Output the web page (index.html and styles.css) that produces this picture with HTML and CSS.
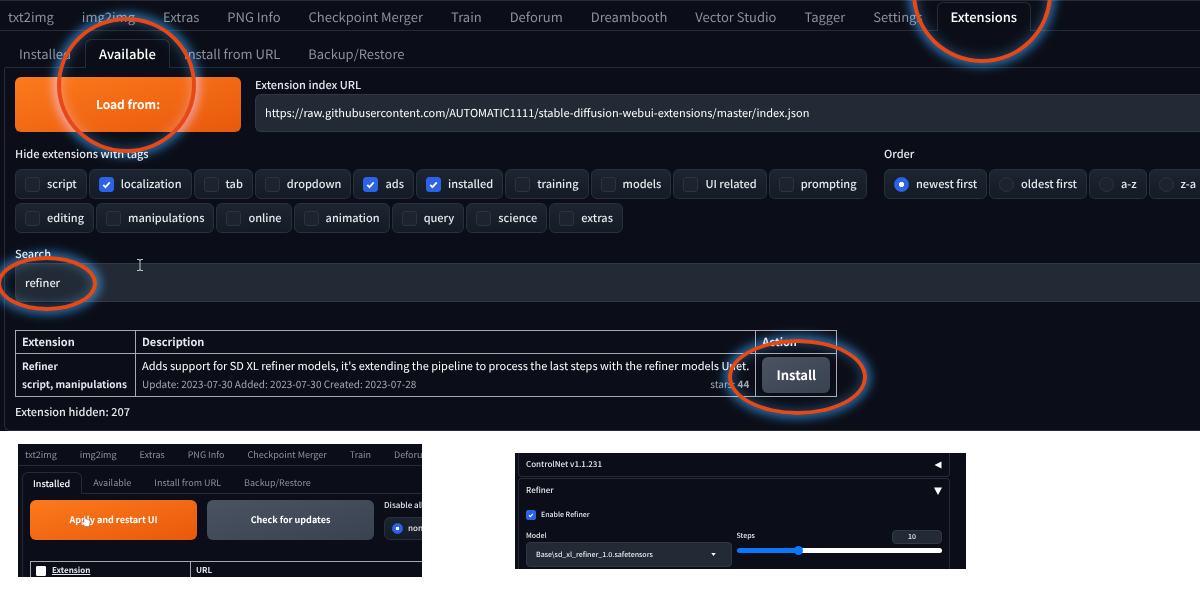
FILE: index.html
```html
<!DOCTYPE html>
<html lang="en">
<head>
<meta charset="utf-8">
<title>Extensions</title>
<link rel="stylesheet" href="styles.css">
</head>
<body>
<main class="page">
  <section class="shot shot-main">
    <nav class="tabs tabs-top">
      <button class="tab">txt2img</button><button class="tab">img2img</button><button class="tab">Extras</button><button class="tab">PNG Info</button><button class="tab">Checkpoint Merger</button><button class="tab">Train</button><button class="tab">Deforum</button><button class="tab">Dreambooth</button><button class="tab">Vector Studio</button><button class="tab">Tagger</button><button class="tab">Settings</button><button class="tab active">Extensions</button>
    </nav>
    <nav class="tabs tabs-sub">
      <button class="tab">Installed</button><button class="tab active">Available</button><button class="tab">Install from URL</button><button class="tab">Backup/Restore</button>
    </nav>
    <div class="panel">
      <div class="load-row">
        <button class="btn primary load">Load from:</button>
        <div class="field grow">
          <label for="url">Extension index URL</label>
          <input id="url" class="text url" type="text" value="https://raw.githubusercontent.com/AUTOMATIC1111/stable-diffusion-webui-extensions/master/index.json">
        </div>
      </div>
      <div class="filters">
        <fieldset class="group tags">
          <legend>Hide extensions with tags</legend>
          <div class="pills">
            <label class="pill"><input type="checkbox">script</label>
            <label class="pill"><input type="checkbox" checked>localization</label>
            <label class="pill"><input type="checkbox">tab</label>
            <label class="pill"><input type="checkbox">dropdown</label>
            <label class="pill"><input type="checkbox" checked>ads</label>
            <label class="pill"><input type="checkbox" checked>installed</label>
            <label class="pill"><input type="checkbox">training</label>
            <label class="pill"><input type="checkbox">models</label>
            <label class="pill"><input type="checkbox">UI related</label>
            <label class="pill"><input type="checkbox">prompting</label>
            <label class="pill"><input type="checkbox">editing</label>
            <label class="pill"><input type="checkbox">manipulations</label>
            <label class="pill"><input type="checkbox">online</label>
            <label class="pill"><input type="checkbox">animation</label>
            <label class="pill"><input type="checkbox">query</label>
            <label class="pill"><input type="checkbox">science</label>
            <label class="pill"><input type="checkbox">extras</label>
          </div>
        </fieldset>
        <fieldset class="group order">
          <legend>Order</legend>
          <div class="pills nowrap">
            <label class="pill"><input type="radio" name="order" checked>newest first</label>
            <label class="pill"><input type="radio" name="order">oldest first</label>
            <label class="pill"><input type="radio" name="order">a-z</label>
            <label class="pill"><input type="radio" name="order">z-a</label>
          </div>
        </fieldset>
      </div>
      <div class="field search">
        <label for="search">Search</label>
        <input id="search" class="text" type="text" value="refiner">
      </div>
      <table class="results">
        <thead><tr><th>Extension</th><th>Description</th><th>Action</th></tr></thead>
        <tbody><tr>
          <td class="name">Refiner<br>script, manipulations</td>
          <td class="desc">Adds support for SD XL refiner models, it's extending the pipeline to process the last steps with the refiner models Unet.
            <div class="meta"><span>Update: 2023-07-30 Added: 2023-07-30 Created: 2023-07-28</span><span>stars: <b>44</b></span></div></td>
          <td><button class="btn secondary install">Install</button></td>
        </tr></tbody>
      </table>
      <p class="hidden-count">Extension hidden: 207</p>
    </div>
  </section>

  <div class="lower">
    <section class="shot shot-installed">
      <nav class="tabs tabs-top">
        <button class="tab">txt2img</button><button class="tab">img2img</button><button class="tab">Extras</button><button class="tab">PNG Info</button><button class="tab">Checkpoint Merger</button><button class="tab">Train</button><button class="tab">Deforum</button>
      </nav>
      <nav class="tabs tabs-sub">
        <button class="tab active">Installed</button><button class="tab">Available</button><button class="tab">Install from URL</button><button class="tab">Backup/Restore</button>
      </nav>
      <div class="panel">
        <div class="actions">
          <button class="btn primary">Apply and restart UI</button>
          <button class="btn secondary">Check for updates</button>
          <fieldset class="group disable">
            <legend>Disable all</legend>
            <div class="pills nowrap"><label class="pill"><input type="radio" name="disable" checked>none</label></div>
          </fieldset>
        </div>
        <table class="installed">
          <thead><tr>
            <th><label class="check-all"><input type="checkbox"><span>Extension</span></label></th>
            <th>URL</th>
          </tr></thead>
        </table>
      </div>
    </section>

    <section class="shot shot-refiner">
      <div class="accordion">
        <button class="acc-head">ControlNet v1.1.231
          <svg class="arrow" viewBox="0 0 8 8"><path d="M7.500 .5V7.500L.5 4z"/></svg></button>
      </div>
      <div class="accordion open">
        <button class="acc-head">Refiner
          <svg class="arrow" viewBox="0 0 8 8"><path d="M0 .5H8L4 8z"/></svg></button>
        <label class="enable"><input type="checkbox" checked>Enable Refiner</label>
        <div class="controls">
          <div class="model">
            <label for="model">Model</label>
            <select id="model"><option>Base\sd_xl_refiner_1.0.safetensors</option></select>
          </div>
          <div class="steps">
            <div class="steps-head">
              <label for="steps">Steps</label>
              <input class="num" type="text" value="10" aria-label="Steps value">
            </div>
            <input id="steps" type="range" min="1" max="32" value="10">
          </div>
        </div>
      </div>
    </section>
  </div>

  <span class="ring ring-tab"></span>
  <span class="ring ring-load"></span>
  <span class="ring ring-search"></span>
  <span class="ring ring-install"></span>
  <svg class="ibeam" viewBox="0 0 8 14"><path d="M1 1.500H3Q4 1.500 4 2.500Q4 1.500 5 1.500H7M4 2V12M1 12.500H3Q4 12.500 4 11.500Q4 12.500 5 12.500H7"/></svg>
  <svg class="hand" viewBox="0 0 10 12"><path d="M3 1Q4 0 4.500 1V4L6 4.200 8 5Q9.500 5.500 9 8L8 11.500H4L1 8Q0 6.500 1.500 6.500L3 7.500z"/></svg>
</main>
</body>
</html>
```
FILE: styles.css
```css
:root {
  --bg: #0b0e18;
  --line: #262b35;
  --field: #212a35;
  --edge: #303844;
  --text: #e4e7eb;
  --muted: #8a909c;
  --blue: #2b62e8;
}

* { box-sizing: border-box; }

body {
  margin: 0;
  background: #fff;
  color: var(--text);
  font: 500 11px/18px "Noto Sans CJK SC", "Noto Sans", sans-serif;
  text-rendering: geometricPrecision;
}

button, input, select { font: inherit; color: inherit; margin: 0; text-rendering: inherit; }
button { border: 0; padding: 0; background: none; white-space: nowrap; }
fieldset { border: 0; margin: 0; padding: 0; min-width: 0; }
legend { padding: 0; }

.page { position: relative; overflow: hidden; min-height: 100vh; }
.shot { background: var(--bg); overflow: hidden; }

/* Tabs */
.tabs { display: flex; border-bottom: 1px solid var(--line); }
.tab {
  flex: none;
  padding: 0 13px;
  border: 1px solid transparent;
  border-bottom: 0;
  border-radius: 6px 6px 0 0;
  color: var(--muted);
  font-size: 13px;
  font-weight: 400;
  line-height: 27px;
}
.tab.active {
  margin-bottom: -1px;
  padding-bottom: 1px;
  border-color: var(--line);
  background: var(--bg);
  color: #fff;
  font-weight: 500;
}
.shot-main .tabs-top { margin-left: -6px; padding-top: 1px; border-top: 1px solid var(--line); }
.shot-main .tabs-sub { margin: 8px 0 0 5px; }

/* Main panel */
.shot-main .panel {
  margin-left: 4px;
  padding: 9px 0 9px 10px;
  border: solid var(--line);
  border-width: 0 0 1px 1px;
  border-radius: 0 0 0 6px;
}
.btn { border-radius: 6px; color: #fff; font-weight: 700; }
.primary { background: linear-gradient(to bottom right, #fb7a1c, #e9590c); }
.secondary { background: linear-gradient(to bottom right, #4a5361, #394250); }
.load-row { display: flex; gap: 14px; }
.load { flex: 0 0 226px; font-size: 12px; }
.field { display: flex; flex-direction: column; }
.field label { line-height: 17px; }
.grow { flex: 1; }
.text {
  width: 100%;
  height: 38px;
  padding: 0 9px;
  border: 1px solid var(--edge);
  border-right: 0;
  border-radius: 6px 0 0 6px;
  background: var(--field);
}
.text.url { font-weight: 400; color: #fff; }
.filters { display: flex; gap: 14px; margin-top: 13px; }
.tags { flex: 0 0 855px; }
.order { flex: 1; }
legend { margin-bottom: 6px; }
.pills { display: flex; flex-wrap: wrap; gap: 4px 2px; }
.nowrap { flex-wrap: nowrap; }
.pill {
  flex: none;
  display: flex;
  align-items: center;
  gap: 7px;
  height: 30px;
  padding: 0 9px;
  border: 1px solid #28303b;
  border-radius: 6px;
  background: linear-gradient(#1c2531, #141b26);
}
input[type="checkbox"], input[type="radio"] {
  appearance: none;
  flex: none;
  width: 15px;
  height: 15px;
  border: 1px solid #2b343f;
  border-radius: 3px;
  background: #1c252f;
}
input[type="radio"] { border-radius: 50%; }
input[type="checkbox"]:checked {
  border-color: var(--blue);
  background: var(--blue) url("data:image/svg+xml,%3Csvg xmlns='http://www.w3.org/2000/svg' viewBox='0 0 16 16'%3E%3Cpath d='M4 8.500l2.700 2.700L12 5.500' fill='none' stroke='white' stroke-width='2.200'/%3E%3C/svg%3E") center / 100%;
}
input[type="radio"]:checked {
  border-color: var(--blue);
  background: radial-gradient(circle, #fff 0 25%, var(--blue) 32%);
}
.search { margin-top: 13px; }
.search .text { height: 39px; }

/* Tables */
table { border-collapse: collapse; }
th, td { border: 1px solid #a6a9af; padding: 2px 6px; text-align: left; font-weight: 500; }
th { font-weight: 700; line-height: 18px; }
.results { margin-top: 28px; }
.results th:first-child { width: 120px; }
.results .name { padding-right: 4px; font-size: 10px; font-weight: 700; }
.results .desc { font-weight: 400; color: #fff; }
.results td { white-space: nowrap; padding-top: 3px; padding-bottom: 3px; }
.meta { display: flex; justify-content: space-between; color: #a3a7ae; font-size: 10px; }
.install { display: block; width: 68px; height: 36px; font-size: 13px; }
.hidden-count { margin: 6px 0 0; }

/* Lower pair */
.lower {
  display: grid;
  grid-template-columns: 404fr 451fr;
  align-items: start;
  gap: 93px;
  padding: 13px 234px 0 18px;
}
.lower .shot { font-size: 8px; line-height: 12px; }
.lower .tab { padding: 0 11px 0 10px; font-size: 9px; line-height: 20px; }
.shot-installed .tabs-top { margin-left: -4px; }
.shot-installed .tabs-sub { margin: 6px 0 0 4px; }
.shot-installed .panel { margin-left: 4px; padding: 6px 0 0 7px; border-left: 1px solid var(--line); }
.actions { display: flex; gap: 10px; }
.actions .btn { flex: 0 0 167px; height: 40px; font-size: 9px; }
.disable { flex: none; }
.disable legend { margin-bottom: 5px; white-space: nowrap; }
.lower .pill { height: 23px; padding: 0 7px; gap: 5px; }
.lower input[type="radio"] { width: 11px; height: 11px; }
.installed { width: 100%; margin-top: 21px; }
.installed th { padding: 2px 5px 0; border-bottom: 0; border-right: 0; line-height: 13px; }
.installed th:first-child { width: 160px; }
.check-all { display: flex; align-items: center; gap: 6px; text-decoration: underline; }
.check-all input[type="checkbox"] { width: 10px; height: 10px; border-color: #fff; border-radius: 1px; background: #fff; }

/* Refiner accordion */
.shot-refiner { margin-top: 9px; padding: 0 16px 0 3px; }
.accordion { padding: 0 7px; border: 1px solid var(--line); border-radius: 4px; }
.accordion:first-child { border-top: 0; border-radius: 0 0 4px 4px; }
.open { margin-top: 1px; padding-bottom: 2px; border-bottom: 0; border-radius: 4px 4px 0 0; }
.acc-head { display: flex; align-items: center; justify-content: space-between; width: 100%; line-height: 23px; }
.arrow { width: 8px; height: 8px; fill: #fff; }
.enable, .controls { font-size: 7px; }
.enable { display: flex; align-items: center; gap: 5px; margin-top: 7px; }
.enable input[type="checkbox"] { width: 10px; height: 10px; border-radius: 2px; }
.controls { display: grid; grid-template-columns: 1fr 1fr; gap: 5px; margin-top: 9px; }
.model label { display: block; }
.model select {
  appearance: none;
  width: 100%;
  height: 25px;
  padding: 0 9px;
  border: 1px solid var(--edge);
  border-radius: 4px;
  background: var(--field) url("data:image/svg+xml,%3Csvg xmlns='http://www.w3.org/2000/svg' viewBox='0 0 6 4'%3E%3Cpath d='M0 0h6L3 4z' fill='white'/%3E%3C/svg%3E") right 15px center / 5px 3px no-repeat;
}
.steps-head { display: flex; justify-content: space-between; }
.num { width: 50px; height: 14px; padding: 0 10px 0 0; border: 1px solid var(--edge); border-radius: 4px; background: var(--field); text-align: center; }
input[type="range"] {
  appearance: none;
  display: block;
  width: 100%;
  height: 5px;
  margin-top: 4px;
  border-radius: 3px;
  background: linear-gradient(to right, #0b78fa 29%, #fff 29%);
}
input[type="range"]::-webkit-slider-thumb { appearance: none; width: 9px; height: 9px; border-radius: 50%; background: #0b78fa; }

/* Highlight rings and pointers lie over the screens */
.ring { position: absolute; pointer-events: none; }
.ring::before, .ring::after {
  content: "";
  position: absolute;
  inset: 0;
  border-radius: 50%;
}
.ring::before {
  box-shadow: 0 0 10px 4px rgba(40, 130, 205, .75), inset 0 0 12px 5px rgba(60, 130, 190, .45);
  mix-blend-mode: screen;
}
.ring::after { border: 4px solid #e64816; }
.ring-tab { left: 912px; top: -76px; width: 140px; height: 139px; }
.ring-load { left: 57px; top: 17px; width: 139px; height: 136px; }
.ring-search { left: -3px; top: 256px; width: 100px; height: 55px; }
.ring-install { left: 728px; top: 339px; width: 139px; height: 76px; }
.ibeam { position: absolute; left: 136px; top: 258px; width: 8px; height: 14px; fill: none; stroke: #c3c7cc; }
.hand { position: absolute; left: 81px; top: 515px; width: 10px; height: 12px; fill: #fff; stroke: #777; stroke-width: .5; }
```
